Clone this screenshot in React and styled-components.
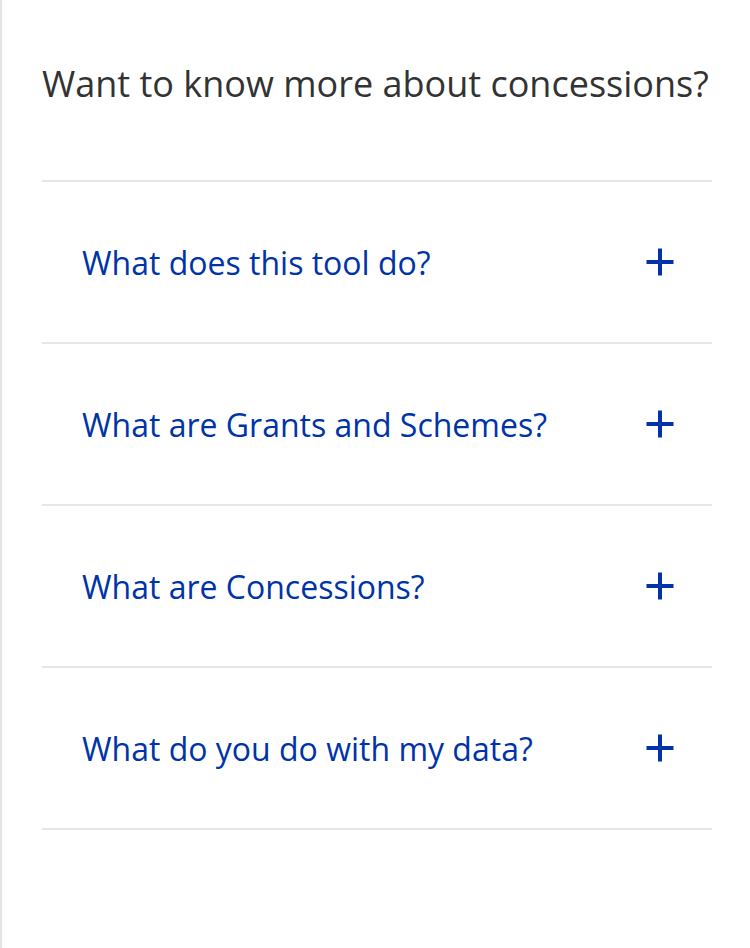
import React from "react";
import styled, { createGlobalStyle } from "styled-components";

const Global = createGlobalStyle`
  html, body { margin: 0; padding: 0; background: #fff; }
  body { font-family: "Open Sans", sans-serif; }
`;

const Page = styled.div`
  width: 750px;
  height: 948px;
  box-sizing: border-box;
  border-left: 2px solid #e4e4e4;
  padding: 0 38px 0 40px;
  background: #fff;
`;

const Heading = styled.h2`
  margin: 0;
  height: 180px;
  box-sizing: border-box;
  padding-top: 60px;
  font-family: "Open Sans", sans-serif;
  font-weight: 400;
  font-size: 36px;
  line-height: 48px;
  letter-spacing: 0;
  color: #333;
  white-space: nowrap;
`;

const List = styled.div`
  border-top: 2px solid #e6e6e6;
`;

const Item = styled.button`
  display: flex;
  align-items: center;
  justify-content: space-between;
  width: 100%;
  height: 162px;
  box-sizing: border-box;
  padding: 0 38px 0 40px;
  border: 0;
  border-bottom: 2px solid #e6e6e6;
  background: transparent;
  cursor: pointer;
  text-align: left;
`;

const Question = styled.span`
  font-family: "Open Sans", sans-serif;
  font-size: 32px;
  color: #0033a8;
`;

const Plus = () => (
  <svg width="28" height="28" viewBox="0 0 28 28">
    <path d="M14 0.5V27.5M0.5 14H27.5" stroke="#0033aa" strokeWidth="4" />
  </svg>
);

const questions = [
  "What does this tool do?",
  "What are Grants and Schemes?",
  "What are Concessions?",
  "What do you do with my data?",
];

export default function App() {
  return (
    <>
      <Global />
      <Page>
        <Heading>Want to know more about concessions?</Heading>
        <List>
          {questions.map((q) => (
            <Item key={q}>
              <Question>{q}</Question>
              <Plus />
            </Item>
          ))}
        </List>
      </Page>
    </>
  );
}
